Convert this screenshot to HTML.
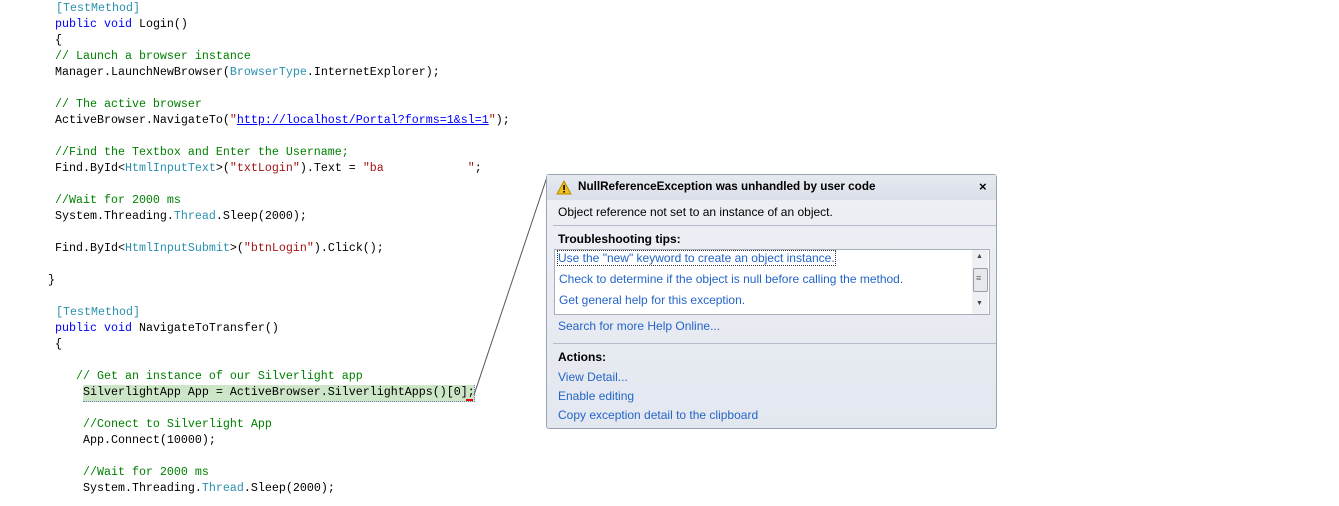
<!DOCTYPE html>
<html><head><meta charset="utf-8"><style>
body{margin:0;width:1339px;height:506px;background:#fff;position:relative;overflow:hidden;font-family:"Liberation Mono",monospace}
.l{position:absolute;font-size:11.67px;line-height:16px;white-space:pre;color:#000}
.k{color:#0000ff}.t{color:#2b91af}.c{color:#008000}.s{color:#a31515}.u{color:#0000ff;text-decoration:underline}
.d{position:absolute;left:546px;top:174px;width:449px;height:253px;border:1px solid #9aa3b3;border-radius:3px;background:linear-gradient(#eef0f5,#e3e7ef);font-family:"Liberation Sans",sans-serif;font-size:12px}
.d div{position:absolute;white-space:nowrap}
.a{color:#2565c8}
</style></head><body>
<div class="l" style="left:56px;top:0"><span class="t">[TestMethod]</span></div>
<div class="l" style="left:55px;top:16px"><span class="k">public void</span> Login()</div>
<div class="l" style="left:55px;top:32px">{</div>
<div class="l c" style="left:55px;top:48px">// Launch a browser instance</div>
<div class="l" style="left:55px;top:64px">Manager.LaunchNewBrowser(<span class="t">BrowserType</span>.InternetExplorer);</div>
<div class="l c" style="left:55px;top:96px">// The active browser</div>
<div class="l" style="left:55px;top:112px">ActiveBrowser.NavigateTo(<span class="s">"<span class="u">http://localhost/Portal?forms=1&amp;sl=1</span>"</span>);</div>
<div class="l c" style="left:55px;top:144px">//Find the Textbox and Enter the Username;</div>
<div class="l" style="left:55px;top:160px">Find.ById&lt;<span class="t">HtmlInputText</span>&gt;(<span class="s">"txtLogin"</span>).Text = <span class="s">"ba            "</span>;</div>
<div class="l c" style="left:55px;top:192px">//Wait for 2000 ms</div>
<div class="l" style="left:55px;top:208px">System.Threading.<span class="t">Thread</span>.Sleep(2000);</div>
<div class="l" style="left:55px;top:240px">Find.ById&lt;<span class="t">HtmlInputSubmit</span>&gt;(<span class="s">"btnLogin"</span>).Click();</div>
<div class="l" style="left:48px;top:272px">}</div>
<div class="l" style="left:56px;top:304px"><span class="t">[TestMethod]</span></div>
<div class="l" style="left:55px;top:320px"><span class="k">public void</span> NavigateToTransfer()</div>
<div class="l" style="left:55px;top:336px">{</div>
<div class="l c" style="left:55px;top:368px">   // Get an instance of our Silverlight app</div>
<div style="position:absolute;left:83px;top:385px;width:391px;height:16px;background:#cde6c7;border-bottom:1px dotted #6a7fb8;border-right:1px dotted #6a7fb8"></div>
<div class="l" style="left:55px;top:384px">    SilverlightApp App = ActiveBrowser.SilverlightApps()[0];</div>
<div style="position:absolute;left:466px;top:399px;width:7px;height:2px;background:#e00"></div>
<div class="l c" style="left:55px;top:416px">    //Conect to Silverlight App</div>
<div class="l" style="left:55px;top:432px">    App.Connect(10000);</div>
<div class="l c" style="left:55px;top:464px">    //Wait for 2000 ms</div>
<div class="l" style="left:55px;top:480px">    System.Threading.<span class="t">Thread</span>.Sleep(2000);</div>
<svg style="position:absolute;left:0;top:0" width="1339" height="506"><line x1="547" y1="177" x2="474" y2="395" stroke="#555" stroke-width="1"/></svg>
<div class="d">
<div style="left:0;top:0;width:449px;height:25px;background:linear-gradient(#e6e9f0,#dadfe8)"></div>
<svg style="position:absolute;left:9px;top:5px" width="16" height="15"><path d="M8 1L15 14H1Z" fill="#f2c21a" stroke="#b88a00"/><rect x="7.3" y="5" width="1.6" height="5" fill="#000"/><rect x="7.3" y="11" width="1.6" height="1.6" fill="#000"/></svg>
<div style="left:31px;top:5px;font-weight:bold;font-size:11.7px">NullReferenceException was unhandled by user code</div>
<div style="left:432px;top:4px;font-size:13px;font-weight:bold">×</div>
<div style="left:11px;top:30px">Object reference not set to an instance of an object.</div>
<div style="left:6px;top:50px;width:443px;height:1px;background:#b4bccb"></div>
<div style="left:11px;top:57px;font-weight:bold">Troubleshooting tips:</div>
<div style="left:7px;top:74px;width:434px;height:64px;background:#fff;border:1px solid #a9b0bc"></div>
<div class="a" style="left:11px;top:76px;outline:1px dotted #333">Use the "new" keyword to create an object instance.</div>
<div class="a" style="left:12px;top:97px">Check to determine if the object is null before calling the method.</div>
<div class="a" style="left:12px;top:118px">Get general help for this exception.</div>
<div style="left:425px;top:75px;width:16px;height:64px;background:#eef0f3"></div>
<div style="left:426px;top:93px;width:13px;height:22px;background:#e6e8ec;border:1px solid #9aa0a8;border-radius:2px"></div>
<div style="left:429px;top:78px;font-size:7px;color:#444">▲</div>
<div style="left:429px;top:125px;font-size:7px;color:#444">▼</div>
<div style="left:429px;top:99px;font-size:9px;color:#666;line-height:9px">≡</div>
<div class="a" style="left:11px;top:144px">Search for more Help Online...</div>
<div style="left:6px;top:168px;width:443px;height:1px;background:#b4bccb"></div>
<div style="left:11px;top:175px;font-weight:bold">Actions:</div>
<div class="a" style="left:11px;top:195px">View Detail...</div>
<div class="a" style="left:11px;top:214px">Enable editing</div>
<div class="a" style="left:11px;top:233px">Copy exception detail to the clipboard</div>
</div>
</body></html>
